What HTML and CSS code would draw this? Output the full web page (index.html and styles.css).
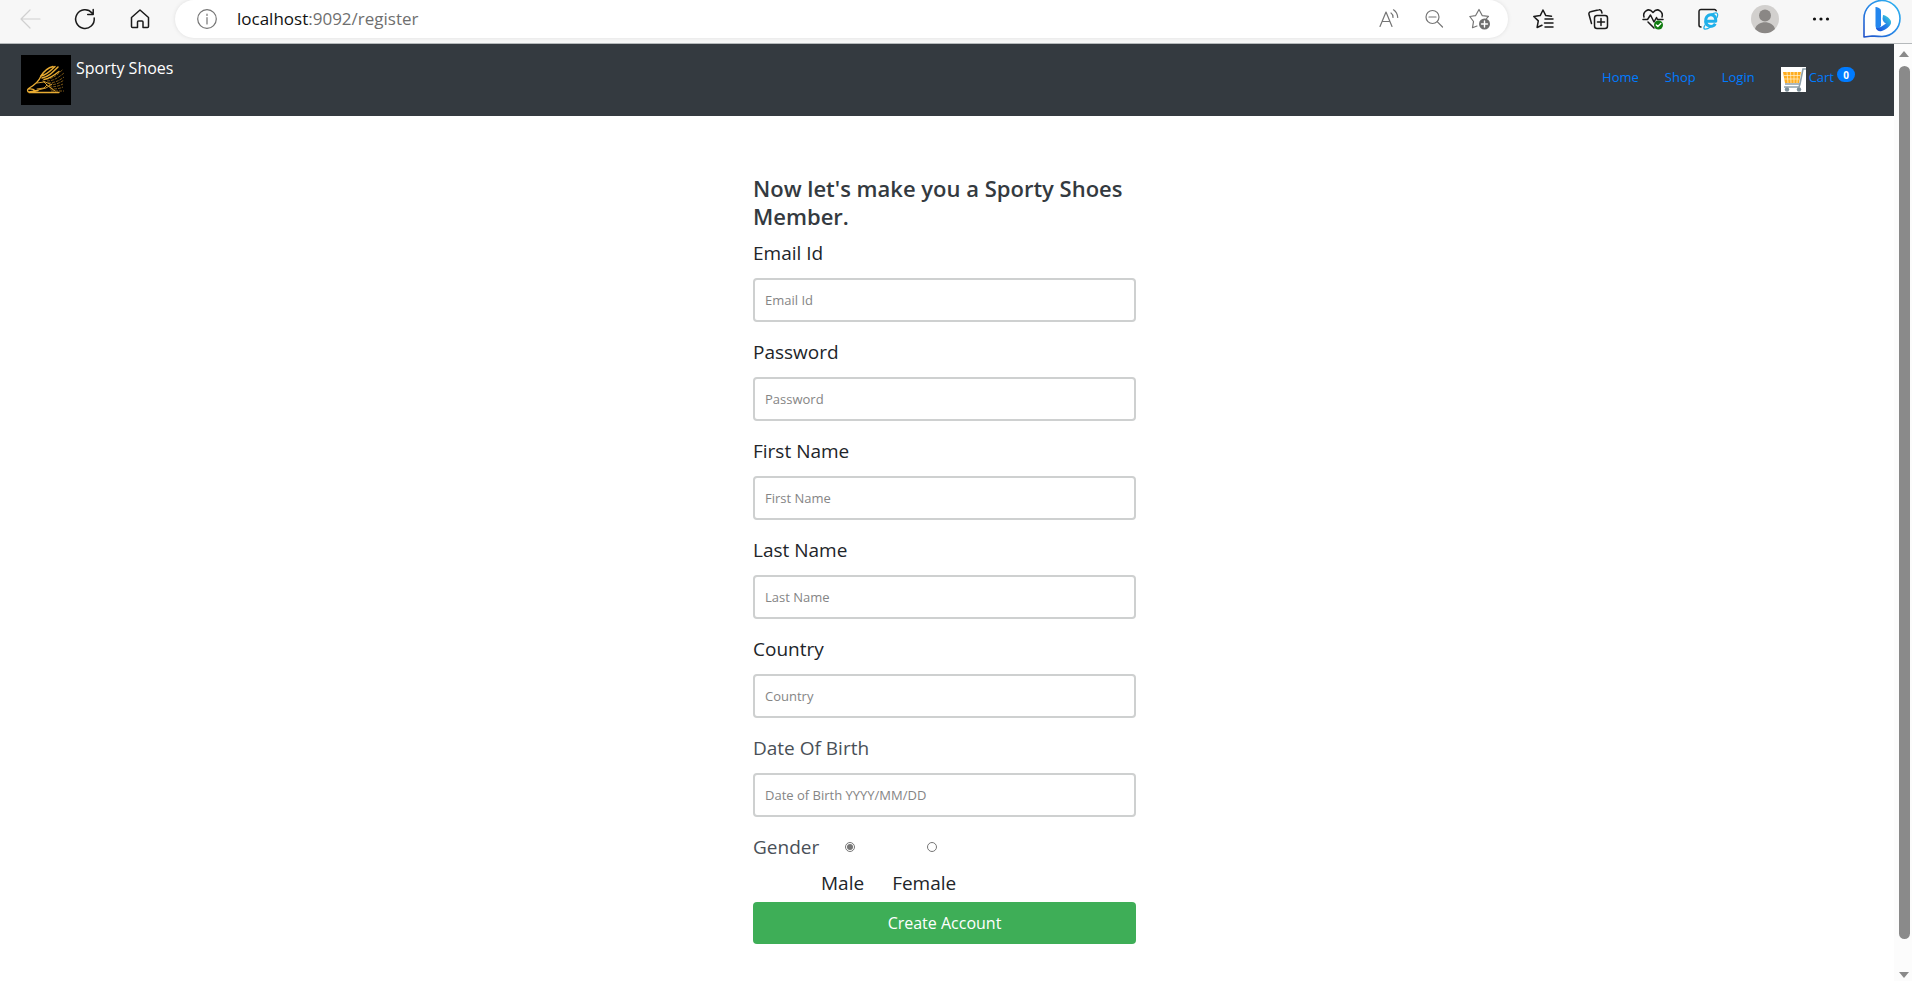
FILE: index.html
```html
<!DOCTYPE html>
<html lang="en">
<head>
<meta charset="utf-8">
<title>Sporty Shoes - Register</title>
<link rel="stylesheet" href="styles.css">
</head>
<body>
<header class="toolbar">
  <div class="tools">
    <button class="tool faint" aria-label="Back"><svg viewBox="0 0 20 20"><path d="M20 10H1M10 1L1 10l9 9"/></svg></button>
    <button class="tool" aria-label="Reload"><svg viewBox="0 0 20 20"><path class="bold" d="M19.200 9A9.300 9.300 0 1 1 17 4M18.200 .5v5h-5.500"/></svg></button>
    <button class="tool" aria-label="Home"><svg viewBox="0 0 20 20"><path class="bold" d="M1.500 8.500L10 1l8.500 7.500V17.500a1 1 0 0 1-1 1H13V13a1 1 0 0 0-1-1H8.500a1 1 0 0 0-1 1v5.500H2.500a1 1 0 0 1-1-1z"/></svg></button>
  </div>
  <div class="address">
    <button class="tool gray" aria-label="Site information"><svg viewBox="0 0 20 20"><circle cx="10" cy="10" r="9.300"/><path d="M10 8.500V15M10 5v1.500"/></svg></button>
    <div class="url"><span class="host">localhost</span>:9092/register</div>
    <button class="tool gray" aria-label="Read aloud"><svg viewBox="0 0 20 20"><path d="M1 17.500L7 3l6 14.500M3 12.500h8M12 4c1.500 1 2 2.500 2 4.500M14.500 .8c2.500 1.700 4 4 4.200 7.700"/></svg></button>
    <button class="tool gray" aria-label="Zoom out"><svg viewBox="0 0 20 20"><circle cx="8.500" cy="8" r="6.500"/><path d="M5 8h7M13.200 12.700l5.300 5.300"/></svg></button>
    <button class="tool wide gray" aria-label="Add to favorites"><svg viewBox="0 0 22 22"><path d="M8 18l-4.500 1.700 1-6.200L.8 8.500l5.700-.8L10 1.500l3.300 6.200 6.200.6-2.500 2.800"/><circle class="solid" cx="15.500" cy="16" r="5.500"/><path class="light" d="M15.500 13v6M12.500 16h6"/></svg></button>
  </div>
  <div class="tools">
    <button class="tool" aria-label="Favorites"><svg viewBox="0 0 20 20"><path class="bold" d="M18.500 7.200l-5.700-.6L10 1 7.200 6.600.8 7.500l4.500 4.400-1.200 6.600L9 16.200M12 10h8M11.500 14H20M12 18h8"/></svg></button>
    <button class="tool" aria-label="Collections"><svg viewBox="0 0 20 20"><path class="bold" d="M3.500 14.500L1 5.500a2 2 0 0 1 1.500-2.700L11 .8a2 2 0 0 1 2.500 1.700L14 4"/><rect class="bold" x="6.500" y="6.500" width="13" height="13" rx="2.500"/><path class="bold" d="M13 9.500v7M9.500 13h7"/></svg></button>
    <button class="tool" aria-label="Browser essentials"><svg viewBox="0 0 20 20"><path class="bold" d="M1 8C-.5 3.500 5-2.500 10 3.500 15-2.500 20.500 3.500 19 8M0 10.500h4.500L7.500 6l3.500 7 2.500-4.500 1 2H20M5 13l6 6"/><circle class="green" cx="15.500" cy="16" r="4.500"/><path class="light" d="M13.300 16l1.500 1.500 3-3"/></svg></button>
    <button class="tool" aria-label="Internet Explorer mode"><svg viewBox="0 0 20 20"><path class="bold" d="M3 18a2 2 0 0 1-2-2V2.500A2 2 0 0 1 3 .5h13.500a2 2 0 0 1 1.700 1.200"/><path class="ie" d="M8 12.200h9.800c.3-7.700-8.300-8.400-9.900-2.500-1.700 7.800 6.600 9.800 9.400 5"/><path class="swirl" d="M7 16c-3.500 6 2 4.500 5.500 2M13 5.500c5-3 8-2 6 3"/></svg></button>
  </div>
  <div class="tools profile">
    <button class="tool avatar" aria-label="Profile"><svg viewBox="0 0 28 28"><circle cx="14" cy="14" r="14" fill="#d2d0ce"/><circle cx="14" cy="10.500" r="6" fill="#8a8785"/><path fill="#8a8785" d="M4 24c2-9 18-9 20 0a14 14 0 0 1-20 0z"/></svg></button>
    <button class="tool" aria-label="Settings and more"><svg viewBox="0 0 20 20"><g fill="#111"><circle cx="3.500" cy="10" r="1.600"/><circle cx="10" cy="10" r="1.600"/><circle cx="16.500" cy="10" r="1.600"/></g></svg></button>
    <button class="tool bing" aria-label="Bing chat"><svg viewBox="0 0 38 38">
      <defs><linearGradient id="ring" x1="0" y1="1" x2="1" y2="0"><stop offset="0" stop-color="#2050c8"/><stop offset=".5" stop-color="#2689e8"/><stop offset="1" stop-color="#30b8f0"/></linearGradient>
      <linearGradient id="mark" x1="0" y1="1" x2="1" y2="0"><stop offset="0" stop-color="#1a4fd8"/><stop offset=".5" stop-color="#2380e8"/><stop offset="1" stop-color="#3fe0d8"/></linearGradient></defs>
      <path d="M1 37V19A18 18 0 1 1 19 36.500c-6 0-8-.5-10-.5z" fill="#fff" stroke="url(#ring)" stroke-width="1.600"/>
      <path d="M12.500 7c1.500 0 5.500 1 5.500 4v14.500l-2.500 4.500c-2-.5-3-2.500-3-4.500z" fill="#2386ee"/>
      <path d="M20 15c1-.5 7.500 3 8 6.500 1 4.500-6.500 9-10 9.800-2.500.4-4.500-1-5.200-3.500 2.200.7 4.200-.3 5.700-1.300l4.500-3c-2-1-3-2.500-3.500-4.500z" fill="url(#mark)"/></svg></button>
  </div>
</header>
<div class="window">
  <div class="page">
    <nav class="navbar">
      <a class="brand" href="#">
        <svg class="logo" viewBox="0 0 50 50"><rect width="50" height="50" fill="#000"/>
          <g fill="none" stroke="#8a6118" stroke-width=".9" stroke-dasharray="3 1">
            <path d="M25 24c6 0 11-3 17-10M26 26c6 0 11-3 17-8M27 28c6 0 11-2 16-6M28 30c6 0 11-2 15-5M28 32c6 0 10-1 14-3M29 34c5 0 9 0 13-2M30 36h13"/>
          </g>
          <g fill="none" stroke="#e8ab32" stroke-linecap="round" stroke-linejoin="round">
            <path stroke-width="1.300" d="M20 21c-2 5-6 9-12.500 12.500-1.500 1-1.300 3.300.5 3.500l9-1.500M8 37.500h30M7.500 34c3-.5 5 0 7 2"/>
            <path stroke-width="1.500" d="M20 21c3-5 6-8 12-9.500M20 21c6-1 9-5 14-9.500M21 23c6-1 10-5 16-11M23 24.500c6-1 10-4 15-8"/>
            <path stroke-width=".9" d="M16 28l7-1 3 3-3 3-7 1M22 26l7 3M26 30l8 6M17 35l8-2 6-4"/>
          </g>
        </svg>
        <span>Sporty Shoes</span>
      </a>
      <div class="links">
        <a href="#">Home</a>
        <a href="#">Shop</a>
        <a href="#">Login</a>
        <a class="cart" href="#">
          <svg class="cart-icon" viewBox="0 0 25 25"><rect width="25" height="25" fill="#fff"/><path d="M2 5h18l-2 11H4z" fill="#ffad1f"/><path d="M3 8.500h16M3 12h15M6 5l1 11M9.500 5l.5 11M13 5v11M16.500 5L16 16" stroke="#fff3d6" stroke-width=".7" fill="none"/><path d="M25 2h-3l-3 15H4M19 17l-1 3H3" stroke="#8fa0aa" stroke-width="1.600" fill="none"/><circle cx="6" cy="22.500" r="2.200" fill="#7d8f99"/><circle cx="18" cy="22.500" r="2.200" fill="#7d8f99"/></svg>
          <span>Cart</span><span class="badge">0</span>
        </a>
      </div>
    </nav>
    <main class="content">
      <form class="register">
        <h1>Now let's make you a Sporty Shoes Member.</h1>
        <div class="field"><label for="email">Email Id</label><input id="email" type="text" placeholder="Email Id"></div>
        <div class="field"><label for="password">Password</label><input id="password" type="password" placeholder="Password"></div>
        <div class="field"><label for="first">First Name</label><input id="first" type="text" placeholder="First Name"></div>
        <div class="field"><label for="last">Last Name</label><input id="last" type="text" placeholder="Last Name"></div>
        <div class="field"><label for="country">Country</label><input id="country" type="text" placeholder="Country"></div>
        <div class="field"><label class="muted" for="dob">Date Of Birth</label><input id="dob" type="text" placeholder="Date of Birth YYYY/MM/DD"></div>
        <div class="gender" role="radiogroup" aria-labelledby="gender-label">
          <span class="muted" id="gender-label">Gender</span>
          <div class="option"><input id="male" type="radio" name="gender" checked><label for="male">Male</label></div>
          <div class="option"><input id="female" type="radio" name="gender"><label for="female">Female</label></div>
        </div>
        <button class="submit" type="submit">Create Account</button>
      </form>
    </main>
  </div>
  <div class="scrollbar" aria-hidden="true">
    <div class="arrow up"></div>
    <div class="track"><div class="thumb"></div></div>
    <div class="arrow down"></div>
  </div>
</div>
</body>
</html>
```
FILE: styles.css
```css
* { box-sizing: border-box; }

body {
  margin: 0;
  height: 100vh;
  display: flex;
  flex-direction: column;
  overflow: hidden;
  background: #fff;
  color: #212529;
  font-family: "Open Sans", "Noto Sans", sans-serif;
}

a { color: #007bff; text-decoration: none; }
button, input { font-family: inherit; }

/* Browser toolbar */
.toolbar {
  flex: none;
  display: flex;
  height: 44px;
  gap: 25px;
  padding: 0 11px 0 20px;
  background: #f7f7f7;
  border-bottom: 1px solid #b5b9bb;
}
.tools { display: flex; align-items: center; gap: 35px; height: 38px; }
.profile { gap: 32px; margin-left: 8px; }
.tool {
  flex: none;
  width: 20px;
  height: 20px;
  padding: 0;
  border: 0;
  background: none;
  color: #1a1a1a;
}
.tool svg { display: block; width: 100%; height: 100%; overflow: visible; }
.tool path, .tool circle, .tool rect { stroke-linejoin: round; stroke-linecap: round; }
.tool:not(.avatar):not(.bing) svg > path,
.tool:not(.avatar) svg > circle,
.tool svg > rect { fill: none; stroke: currentColor; stroke-width: 1.2; }
.tool:not(.avatar):not(.bing) svg > .bold { stroke-width: 1.5; }
.tool:not(.avatar) svg > .solid { fill: #6e6e6e; stroke: none; }
.tool:not(.avatar) svg > .green { fill: #107c10; stroke: none; }
.tool:not(.avatar):not(.bing) svg > .light { stroke: #fff; stroke-width: 1.4; }
.tool:not(.avatar):not(.bing) svg > .ie { stroke: #1fb0ea; stroke-width: 3; stroke-linecap: butt; }
.tool:not(.avatar):not(.bing) svg > .swirl { stroke: #1fb0ea; stroke-width: 1.3; }
.faint { color: #d0d0d0; }
.gray { color: #757575; }
.wide { width: 22px; height: 22px; }
.avatar { width: 28px; height: 28px; }
.bing { width: 38px; height: 38px; }

.address {
  flex: 1;
  display: flex;
  align-items: center;
  gap: 25px;
  height: 38px;
  padding: 0 17px 0 22px;
  border-radius: 19px;
  background: #fff;
  box-shadow: 0 0 4px rgba(0, 0, 0, .1);
}
.url {
  flex: 1;
  margin-left: -5px;
  font-size: 17px;
  line-height: 24px;
  color: #6f6f6f;
}
.host { color: #111; }

/* Page area */
.window { flex: 1; display: flex; min-height: 0; }
.page { flex: 1; overflow: hidden; }

.navbar {
  display: flex;
  justify-content: space-between;
  align-items: flex-start;
  padding: 11px 39px 11px 21px;
  background: #343a40;
}
.brand {
  display: flex;
  gap: 5px;
  font-size: 16px;
  line-height: 26px;
  color: #fff;
}
.logo { width: 50px; height: 50px; }
.links {
  display: flex;
  gap: 26px;
  padding-top: 12px;
  font-size: 13px;
  line-height: 20px;
}
.cart { display: flex; align-items: flex-start; gap: 3px; }
.cart-icon { width: 25px; height: 25px; }
.badge {
  width: 18px;
  height: 15px;
  border-radius: 8px;
  background: #007bff;
  color: #fff;
  font-size: 10px;
  font-weight: 700;
  line-height: 16px;
  text-align: center;
}

.content { display: flex; justify-content: center; padding: 58px 5px 0 0; }
.register { width: 383px; }
.register h1 {
  margin: 0 0 8px;
  font-size: 22px;
  font-weight: 600;
  line-height: 28px;
  color: #343a40;
}
.field {
  display: flex;
  flex-direction: column;
  gap: 10px;
  margin-bottom: 15px;
}
.field label, .gender { font-size: 19px; line-height: 30px; }
.muted { color: #495057; }
.field input {
  height: 44px;
  padding: 0 10px;
  border: 2px solid #ced0d0;
  border-radius: 4px;
  background: #fff;
  color: #212529;
  font-size: 13px;
}
.field input::placeholder { color: #858585; opacity: 1; }

.gender { display: flex; gap: 28px; margin-bottom: 4px; }
.gender > .muted { width: 40px; white-space: nowrap; }
.option {
  display: flex;
  flex-direction: column;
  align-items: center;
  gap: 6px;
}
.option input {
  appearance: none;
  width: 10px;
  height: 10px;
  margin: 10px 0 10px 15px;
  padding: 1px;
  border: 1px solid #767676;
  border-radius: 50%;
  background-clip: content-box;
}
.option input:checked { background-color: #767676; }

.submit {
  display: block;
  width: 100%;
  height: 42px;
  border: 0;
  border-radius: 4px;
  background: #3eae57;
  color: #fff;
  font-size: 16px;
}

/* Scrollbar */
.scrollbar {
  display: flex;
  flex-direction: column;
  align-items: center;
  width: 18px;
  padding: 7px 0 3px 2px;
  background: #fcfcfc;
}
.arrow { border: 5px solid transparent; }
.up { border-bottom: 6px solid #8a8a8a; border-top: 0; }
.down { border-top: 6px solid #8a8a8a; border-bottom: 0; }
.track { flex: 1; width: 11px; margin: 9px 0 6px; }
.thumb { height: 97%; border-radius: 6px; background: #8a8a8a; }
```
